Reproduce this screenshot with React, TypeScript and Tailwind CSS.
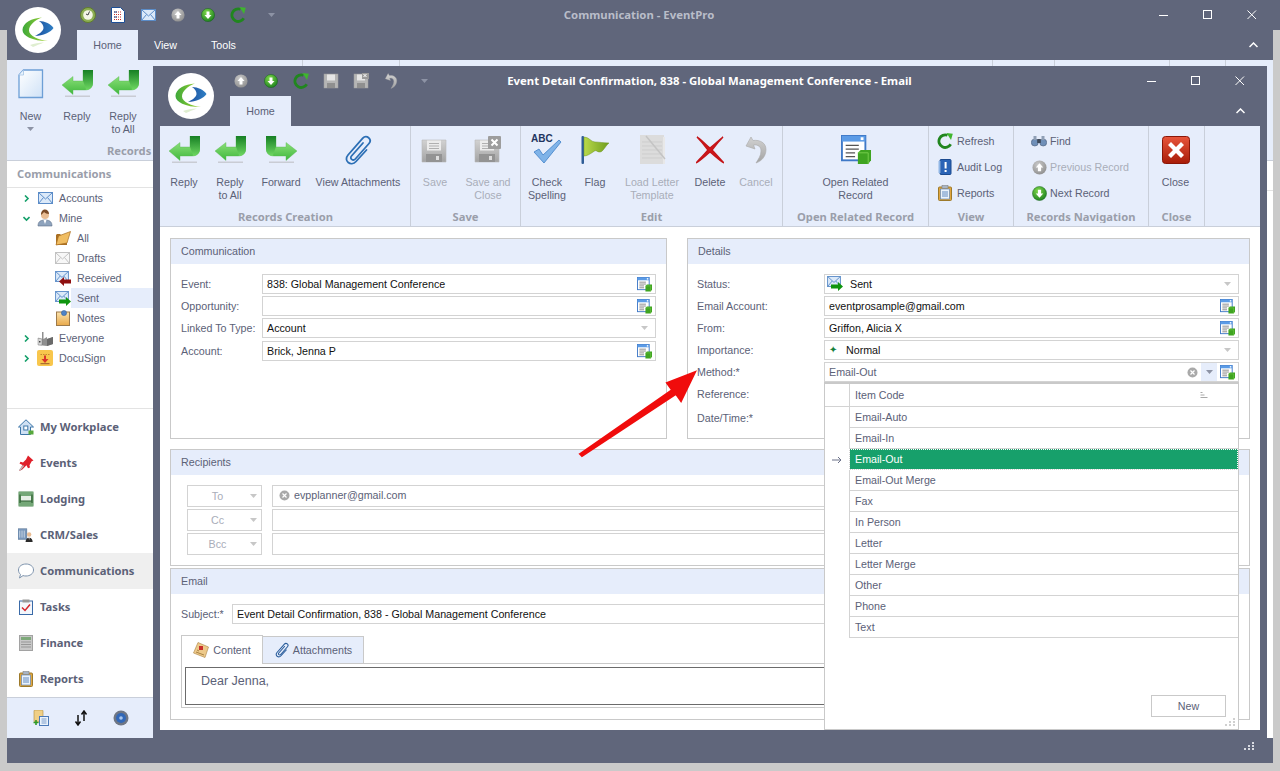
import React from "react";

type P = { s?: number };
const BOLD = "font-['Noto_Sans',sans-serif] font-bold text-[11.2px]";
const Defs = () => (
  <svg width="0" height="0" className="absolute">
    <defs>
      <linearGradient id="gArrow" x1="0" y1="0" x2="0" y2="1"><stop offset="0" stopColor="#a6ec8e" /><stop offset="1" stopColor="#3fb83c" /></linearGradient>
      <linearGradient id="gBend" x1="0" y1="0" x2="0" y2="1"><stop offset="0" stopColor="#167f24" /><stop offset="1" stopColor="#6fd862" /></linearGradient>
      <radialGradient id="gGreenBall" cx="0.4" cy="0.3" r="0.8"><stop offset="0" stopColor="#7fd84a" /><stop offset="1" stopColor="#157a1c" /></radialGradient>
      <radialGradient id="gGrayBall" cx="0.4" cy="0.3" r="0.8"><stop offset="0" stopColor="#c9c9c9" /><stop offset="1" stopColor="#8a8a8a" /></radialGradient>
      <linearGradient id="gPage" x1="0" y1="0" x2="1" y2="1"><stop offset="0" stopColor="#ffffff" /><stop offset="1" stopColor="#cfe2f7" /></linearGradient>
      <linearGradient id="gRed" x1="0" y1="0" x2="0" y2="1"><stop offset="0" stopColor="#e8553b" /><stop offset="1" stopColor="#a81c08" /></linearGradient>
      <linearGradient id="gFlag" x1="0" y1="0" x2="1" y2="0"><stop offset="0" stopColor="#b9d94a" /><stop offset="1" stopColor="#6f9d1d" /></linearGradient>
      <linearGradient id="gGray" x1="0" y1="0" x2="0" y2="1"><stop offset="0" stopColor="#d2d2d2" /><stop offset="1" stopColor="#a3a3a3" /></linearGradient>
      <linearGradient id="gOrange" x1="0" y1="0" x2="0" y2="1"><stop offset="0" stopColor="#fbe3ad" /><stop offset="1" stopColor="#e9a94a" /></linearGradient>
      <linearGradient id="gBlue" x1="0" y1="0" x2="1" y2="0"><stop offset="0" stopColor="#1c4f9e" /><stop offset="1" stopColor="#2f7fc4" /></linearGradient>
      <linearGradient id="gSwoosh" x1="0" y1="0" x2="1" y2="0"><stop offset="0" stopColor="#3da83a" /><stop offset="1" stopColor="#a7d52f" /></linearGradient>
    </defs>
  </svg>
);

const Logo = () => (
  <svg width="46" height="46" viewBox="0 0 46 46">
    <circle cx="23" cy="23" r="23" fill="#fff" />
    <path d="M27 10.500C17 11 7.500 16 7.500 23c0 6 9.500 11 25.500 11-9-1-19-5-19-10.500C14 18 20 13 27 10.500z" fill="url(#gSwoosh)" />
    <path d="M24 14c6 0 12 3 14.500 7-2.500 4-10.500 8-18.500 8 4-2 8.500-5 8.500-8 0-3-1.500-5-4.500-7z" fill="url(#gBlue)" />
    <path d="M15 38c4-1.500 9-2.500 14-2.500-4 1.500-8 3-11 4.500z" fill="#dfeed0" />
  </svg>
);

const Reply = ({ flip = false }: { flip?: boolean }) => (
  <svg width="31" height="28" viewBox="0 0 31 28" className={flip ? "-scale-x-100" : ""}>
    <rect x="3" y="25.500" width="25" height="1.500" fill="#c9ccd4" />
    <path d="M0 15 11 6.500V11h10V0h10v12c0 5-3 8-8 8H11v4.500z" fill="url(#gArrow)" stroke="#58b850" strokeWidth=".4" />
    <path d="M21 0h10v12c0 4-2 7-6 8-1 0-2-4-4-9z" fill="url(#gBend)" />
  </svg>
);
const NewDoc = () => (
  <svg width="26" height="30" viewBox="0 0 26 30">
    <path d="M5.500 1h19v27.500H1V6z" fill="url(#gPage)" stroke="#6d9fd6" strokeWidth="1.300" />
    <path d="M5.500 1v5H1" fill="#eaf3fc" stroke="#a5c4e6" strokeWidth=".8" />
  </svg>
);
const BallUp = ({ s = 16 }: P) => (
  <svg width={s} height={s} viewBox="0 0 16 16"><circle cx="8" cy="8" r="7.500" fill="url(#gGrayBall)" /><path d="M8 3.500 12 8H9.700v4H6.300V8H4z" fill="#fff" /></svg>
);
const BallDown = ({ s = 16 }: P) => (
  <svg width={s} height={s} viewBox="0 0 16 16"><circle cx="8" cy="8" r="7.500" fill="url(#gGreenBall)" stroke="#0f5f15" strokeWidth=".5" /><path d="M8 12.500 4 8h2.300V4h3.400v4H12z" fill="#fff" /></svg>
);
const Refresh = ({ s = 16 }: P) => (
  <svg width={s} height={s} viewBox="0 0 16 16"><path d="M13.700 11.300A6.300 6.300 0 1 1 10.500 2.300" fill="none" stroke="#21861f" strokeWidth="2.800" /><path d="M9.500 0 15.800 .8 14 7z" fill="#3fb52e" /></svg>
);
const Clock = () => (
  <svg width="16" height="16" viewBox="0 0 16 16"><circle cx="8" cy="8" r="7.500" fill="#8dae53" stroke="#5f7d2e" /><circle cx="8" cy="8" r="4.800" fill="#f3f5e6" /><path d="M8 8 9.500 4.500M8 8 6 7" stroke="#444" strokeWidth="1" /></svg>
);
const DocLines = () => (
  <svg width="14" height="16" viewBox="0 0 14 16"><path d="M.5.500h9L13.500 4.500V15.500H.5z" fill="#fff" stroke="#1d4f96" /><path d="M3 5h8M3 7.500h8M3 10h8M3 12.500h8" stroke="#c8322c" strokeDasharray="1 1" /><path d="M3 5h3M3 10h3" stroke="#1d4f96" /></svg>
);
const Mail = ({ w = 15, h = 12 }: { w?: number; h?: number }) => (
  <svg width={w} height={h} viewBox="0 0 15 12"><rect x=".5" y=".5" width="14" height="11" fill="#dbe9f9" stroke="#5b8cc8" /><path d="M.5.500 7.500 7l7-6.500M.5 11.500 5.500 5.500M14.500 11.500 9.500 5.500" fill="none" stroke="#5b8cc8" /></svg>
);
const Floppy = ({ x = false }: { x?: boolean }) => (
  <svg width="28" height="30" viewBox="0 0 28 30">
    <path d="M1 5h24v22H1z" fill="url(#gGray)" stroke="#bbb" strokeWidth=".6" />
    <rect x="6" y="5.500" width="14" height="10" fill="#ececec" />
    <path d="M8 8.500h10M8 11h10M8 13.500h10" stroke="#b0b0b0" />
    <rect x="5" y="19" width="16" height="8" fill="#939393" /><rect x="15" y="21" width="3" height="4" fill="#ddd" />
    {x && <g><rect x="14" y="1" width="13" height="13" rx="1" fill="#9d9d9d" /><path d="M17.500 4.500l6 6m0-6-6 6" stroke="#fff" strokeWidth="2" /></g>}
  </svg>
);
const SmallFloppy = ({ x = false }: { x?: boolean }) => (
  <svg width="16" height="16" viewBox="0 0 16 16">
    <rect x="1" y="1" width="14" height="14" fill="#b5b5b5" stroke="#a0a0a0" strokeWidth=".5" /><rect x="4" y="1.500" width="8" height="6" fill="#e6e6e6" /><rect x="4" y="10" width="8" height="5" fill="#8f8f8f" />
    {x && <g><rect x="9" y="0" width="7" height="6" fill="#9a9a9a" /><path d="m10.500 1 3 3m0-3-3 3" stroke="#fff" /></g>}
  </svg>
);
const Undo = ({ s = 16 }: P) => (
  <svg width={s} height={s} viewBox="0 0 22 28"><path d="M6 1 1 10l9 3-1.500-4c5-.6 7.500 2 7.500 6 0 4.500-2.500 8-5 12 6-2 10-7 10-13.500C21 7 15 3.500 8 4.500z" fill="url(#gGray)" stroke="#aaa" strokeWidth=".6" /></svg>
);
const Clip = ({ s = 32, c = "#2c6fb5" }: { s?: number; c?: string }) => (
  <svg width={s} height={s} viewBox="0 0 32 32" fill="none" stroke={c} strokeWidth={s > 20 ? 1.800 : 2.200} strokeLinecap="round">
    <path d="M21 9 9.500 22c-2.200 2.500 1.500 5.500 3.800 3L27 9.500c3.500-4-2.500-9.500-6.200-5.300L6 21c-5 5.800 3 12 8 6.500L24.500 16" />
  </svg>
);
const Spell = () => (
  <div className="relative w-[32px] h-[32px]">
    <span className="absolute left-0 top-[-1px] text-[10px] leading-[12px] font-bold text-[#1f3560]">ABC</span>
    <svg width="32" height="32" viewBox="0 0 32 32" className="absolute left-0 top-0"><path d="M3 18l5-3 4 6L28 6l2 2-17 21z" fill="#7fb3e8" stroke="#3f80c8" strokeWidth=".8" /></svg>
  </div>
);
const Flag = () => (
  <svg width="30" height="30" viewBox="0 0 30 30"><rect x="1.500" y="1" width="2.500" height="28" rx="1" fill="#2f5d96" /><path d="M4 2c5 0 7 5 11 5 4.500 0 8 1 14 1-3 2-6 9-9 9-4 0-3-3-7 0-3 2-6 4-9 4z" fill="url(#gFlag)" stroke="#6d9420" strokeWidth=".5" /></svg>
);
const LoadLetter = () => (
  <svg width="28" height="30" viewBox="0 0 28 30"><rect x="2" y="0" width="24" height="29" fill="#dcdcdc" /><rect x="25" y="2" width="2" height="27" fill="#e8e8e8" /><path d="M4 7h20M4 11h20M4 15h20M4 19h20M4 23h20" stroke="#cdcdcd" /><path d="M8 1 27 24" stroke="#c4c4c4" strokeWidth="1.500" /></svg>
);
const DelX = () => (
  <svg width="28" height="28" viewBox="0 0 28 28"><path d="M1 1c5 3 9 8 13 11 4-3 8-7 13-11-4 4-8 9-11 13 4 4 8 9 12 13-5-3-10-8-14-11-4 3-9 8-14 11 4-5 9-9 12-13C9 10 5 5 1 1z" fill="#d2161b" stroke="#c41418" strokeWidth="1.400" /></svg>
);
const Related = ({ s = 16 }: P) => (
  <svg width={s} height={s} viewBox="0 0 16 16">
    <rect x=".5" y=".5" width="12.500" height="13" fill="#fff" stroke="#3f79c7" /><rect x=".5" y=".5" width="12.500" height="3" fill="#5b9be6" /><rect x="10.500" y="1.200" width="1.500" height="1.500" fill="#fff" />
    <path d="M2.500 5.500h7M2.500 7.500h7M2.500 9.500h5M2.500 11.500h5" stroke="#555" strokeWidth=".7" />
    <path d="M9 9.500l1.500-1.500H16v5.500L14.500 15.500H9z" fill="#3fa421" /><path d="M9 9.500h5.500V15.500" fill="none" stroke="#77d04e" strokeWidth=".5" />
  </svg>
);
const Audit = () => (
  <svg width="16" height="16" viewBox="0 0 16 16"><rect x="3" y=".5" width="11" height="15" rx="1" fill="#2a63b6" stroke="#1b4a8f" /><rect x="1.500" y="2" width="2" height="12" fill="#8fb6e6" /><rect x="7.600" y="3" width="2" height="6.500" fill="#fff" /><rect x="7.600" y="11" width="2" height="2" fill="#fff" /></svg>
);
const ClipBoard = ({ s = 16 }: P) => (
  <svg width={s} height={s} viewBox="0 0 16 16"><rect x="1.500" y="2" width="13" height="13.500" rx="1" fill="#e0a63f" stroke="#9d7a2a" /><rect x="3.500" y="4" width="9" height="10" fill="#eaf2fb" stroke="#4a79b8" strokeWidth=".6" /><rect x="5" y=".5" width="6" height="3" fill="#a8b4c4" stroke="#777" strokeWidth=".5" /><path d="M5 7h6M5 9h6M5 11h6" stroke="#3f72b5" strokeWidth=".8" /></svg>
);
const Binoc = () => (
  <svg width="16" height="12" viewBox="0 0 16 12"><circle cx="3.800" cy="7.500" r="3.500" fill="#6f8fb8" stroke="#4a5d78" strokeWidth=".6" /><circle cx="12.200" cy="7.500" r="3.500" fill="#6f8fb8" stroke="#4a5d78" strokeWidth=".6" /><rect x="6.200" y="4" width="3.600" height="4" fill="#3f4a5a" /><rect x="2.500" y="1" width="3" height="4" fill="#8f9fb5" /><rect x="10.500" y="1" width="3" height="4" fill="#8f9fb5" /></svg>
);
const CloseBig = () => (
  <svg width="28" height="28" viewBox="0 0 28 28"><rect x=".5" y=".5" width="27" height="27" rx="3" fill="url(#gRed)" stroke="#8a1608" /><path d="M6 9 9 6l5 5 5-5 3 3-5 5 5 5-3 3-5-5-5 5-3-3 5-5z" fill="#fff" /></svg>
);
const Person = () => (
  <svg width="16" height="18" viewBox="0 0 16 18"><path d="M1 17c0-4 2-6 7-6s7 2 7 6z" fill="#8ea3bd" stroke="#5f7189" strokeWidth=".6" /><circle cx="8" cy="6" r="4" fill="#e9bd94" /><path d="M4 6c0-4 2-5.500 4-5.500S12 2 12 5c-2 0-4-1-5-2-.5 1-2 2-3 3z" fill="#7a4a26" /><path d="M6.500 11 8 15l1.500-4z" fill="#fff" /></svg>
);
const Folder = () => (
  <svg width="16" height="16" viewBox="0 0 16 16"><path d="M1 15V5l1-1h3l1 1h6v10z" fill="#a96f22" /><path d="M1 15 3.500 6 15.500 1.500 12 13z" fill="#f0bd62" stroke="#a96f22" strokeWidth=".7" /></svg>
);
const MailGray = () => (
  <svg width="15" height="12" viewBox="0 0 15 12"><rect x=".5" y=".5" width="14" height="11" fill="#f7f7f7" stroke="#c2c2c2" /><path d="M.5.500 7.500 7l7-6.500M.5 11.500 5.500 5.500M14.500 11.500 9.500 5.500" fill="none" stroke="#c2c2c2" /></svg>
);
const MailArrow = ({ c, left = false }: { c: string; left?: boolean }) => (
  <div className="relative w-[16px] h-[15px]">
    <Mail w={14} h={11} />
    <svg width="12" height="9" viewBox="0 0 12 9" className={left ? "absolute right-0 bottom-0 -scale-x-100" : "absolute right-0 bottom-0"}><path d="M0 2.500h7V0l5 4.500L7 9V6.500H0z" fill={c} /></svg>
  </div>
);
const Notes = () => (
  <svg width="14" height="16" viewBox="0 0 14 16"><rect x=".5" y="2" width="13" height="13.500" fill="url(#gOrange)" stroke="#9d7a4a" /><circle cx="8" cy="3" r="2.600" fill="#4f83c6" stroke="#2f5d96" strokeWidth=".5" /></svg>
);
const Factory = () => (
  <svg width="16" height="15" viewBox="0 0 16 15"><path d="M1 14V7l4 1V1h1.500v7L10 6v2l6-2v7l-6 2z" fill="#8f8f8f" /><path d="M1 7l4 1v6H1z" fill="#d8d8d8" stroke="#666" strokeWidth=".4" /><rect x="2" y="10" width="1.500" height="1.500" fill="#444" /><path d="M10 8l6-2v7l-6 2z" fill="#6a6a6a" /></svg>
);
const Docu = () => (
  <svg width="16" height="16" viewBox="0 0 16 16"><rect width="16" height="16" rx="2" fill="#f8c64c" /><path d="M3.500 4.500h9" stroke="#c3892f" strokeDasharray="1.500 1" /><path d="M8 13 4.500 9H7V5.500h2V9h2.500z" fill="#d9352a" /><path d="M3.500 13.700h9" stroke="#9a5a2a" /></svg>
);
const House = () => (
  <svg width="16" height="16" viewBox="0 0 16 16"><path d="M8 .8 .5 8h2v7.500h10V8h3z" fill="#cfe0f3" stroke="#3d76a8" /><rect x="5.800" y="7" width="4" height="4" fill="#fff" stroke="#3d76a8" /><rect x="10.500" y="11.500" width="5" height="4" fill="#57a83b" /></svg>
);
const Pin = () => (
  <svg width="16" height="16" viewBox="0 0 16 16"><path d="M10 .5 15.500 5.500l-1.800.8-2.200 4 .5 2.200-2 .7-1.500-3-4.500 4.500L1 16l3.500-6-3-1.500 1-1.800L5 7.500l3-3z" fill="#e0202a" /><path d="M1.500 15.500 5.500 10.500" stroke="#bbb" strokeWidth="1.500" /></svg>
);
const Bed = () => (
  <svg width="16" height="16" viewBox="0 0 16 16"><rect x=".5" y=".5" width="15" height="15" rx="1" fill="#74a777" stroke="#a5c4a7" /><rect x="3" y="5" width="10" height="5" fill="#e6efe6" /><path d="M2 3.500V12M14 3.500V12M2 10h12" stroke="#2f5f33" strokeWidth="1.200" fill="none" /></svg>
);
const Building = () => (
  <svg width="18" height="16" viewBox="0 0 18 16"><rect x="0" y="1" width="10" height="12" fill="#7896ba" stroke="#50698a" strokeWidth=".5" /><path d="M2 3v8M4.500 3v8M7 3v8" stroke="#d3deea" /><circle cx="12.500" cy="7.500" r="2.500" fill="#e9bd94" /><path d="M8.500 16c0-3 1.500-5 4-5s4 2 4 5z" fill="#2b2b2b" /><path d="M12 11h1l-.5 3z" fill="#fff" /></svg>
);
const Bubble = () => (
  <svg width="16" height="16" viewBox="0 0 16 16"><path d="M8 1c4 0 7.500 2.300 7.500 6S12 13 8 13c-1 0-2-.1-3-.4L1.500 15l1-3.600C1.200 10.300.5 8.800.5 7 .5 3.300 4 1 8 1z" fill="#fff" stroke="#7d93ad" /></svg>
);
const TaskIcon = () => (
  <svg width="14" height="16" viewBox="0 0 14 16"><rect x=".5" y="2" width="13" height="13.500" fill="#f3f7fc" stroke="#3a6aa8" /><rect x="3.500" y=".5" width="7" height="3" fill="#999" /><path d="M3 8.500l3 3 5-6" fill="none" stroke="#d6242c" strokeWidth="1.500" /></svg>
);
const Calc = () => (
  <svg width="14" height="16" viewBox="0 0 14 16"><rect x=".5" y=".5" width="13" height="15" fill="#c8c8c8" stroke="#a2a2a2" /><rect x="2" y="2" width="10" height="3" fill="#7ea97a" /><path d="M2.500 7h9M2.500 9.500h9M2.500 12h9" stroke="#666" strokeWidth="1.200" strokeDasharray="1 1" /></svg>
);
const Pages = () => (
  <svg width="16" height="16" viewBox="0 0 16 16"><rect x="1" y="0" width="9" height="12" rx="1" fill="#f0cf86" stroke="#b08b3a" strokeWidth=".6" /><rect x="6.500" y="6.500" width="9" height="9" fill="#eaf2fb" stroke="#4a79b8" /><path d="M8.500 9h5M8.500 11h5M8.500 13h5" stroke="#4a79b8" strokeWidth=".7" /><path d="M3 10v5M.5 12.500h5" stroke="#2f9a28" strokeWidth="1.600" /></svg>
);
const SortArrows = () => (
  <svg width="16" height="16" viewBox="0 0 16 16"><path d="M5 5v9M2.500 11.500 5 15l2.500-3.500M11 11V1.500M8.500 4.500 11 1l2.500 3.500" fill="none" stroke="#111" strokeWidth="1.500" /></svg>
);
const Disc = () => (
  <svg width="16" height="16" viewBox="0 0 16 16"><circle cx="8" cy="8" r="7.500" fill="#6f7684" /><circle cx="8" cy="8" r="5" fill="#3268b8" /><circle cx="8" cy="8" r="1.800" fill="#a9c6ec" /></svg>
);
const ContentIco = () => (
  <svg width="16" height="16" viewBox="0 0 16 16"><path d="M5 .5 15.500 5 12 15.500 .5 11z" fill="#edc98a" stroke="#a98242" strokeWidth=".6" /><rect x="6" y="4" width="4" height="4" fill="#c9302c" /><path d="M3 10l8 3M4 8l2 1" stroke="#a98242" /></svg>
);
const Caret = ({ c = "#c7c7c7" }: { c?: string }) => (
  <svg width="7" height="4" viewBox="0 0 7 4" className="shrink-0"><path d="M0 0h7L3.500 4z" fill={c} /></svg>
);
const TreeCaret = ({ open }: { open?: boolean }) => (
  <svg width="7" height="7" viewBox="0 0 7 7">{open ? <path d="M.5 2 3.500 5 6.500 2" fill="none" stroke="#16a06b" strokeWidth="1.600" /> : <path d="M2 .5 5 3.500 2 6.500" fill="none" stroke="#16a06b" strokeWidth="1.600" />}</svg>
);
const ClearDot = () => (
  <svg width="11" height="11" viewBox="0 0 11 11" className="shrink-0"><circle cx="5.500" cy="5.500" r="5" fill="#a9a9a9" /><path d="m3.500 3.500 4 4m0-4-4 4" stroke="#fff" strokeWidth="1.200" /></svg>
);
const Grip = () => (
  <svg width="11" height="9" viewBox="0 0 11 9" fill="currentColor"><rect x="8" y="0" width="2" height="2" /><rect x="4" y="3" width="2" height="2" /><rect x="8" y="3" width="2" height="2" /><rect x="0" y="6" width="2" height="2" /><rect x="4" y="6" width="2" height="2" /><rect x="8" y="6" width="2" height="2" /></svg>
);

const WinControls = () => (
  <div className="flex items-center text-white">
    <div className="w-[44px] flex justify-center"><svg width="10" height="10" viewBox="0 0 10 10"><path d="M0 5.500h9" stroke="currentColor" /></svg></div>
    <div className="w-[44px] flex justify-center"><svg width="10" height="10" viewBox="0 0 10 10"><rect x=".5" y=".5" width="8" height="8" fill="none" stroke="currentColor" /></svg></div>
    <div className="w-[44px] flex justify-center"><svg width="10" height="10" viewBox="0 0 10 10"><path d="m.5.500 8.500 8.500m0-8.500L.5 9" stroke="currentColor" /></svg></div>
  </div>
);
const Collapse = () => (
  <svg width="9" height="6" viewBox="0 0 9 6"><path d="M.5 5 4.500 1l4 4" fill="none" stroke="#fff" strokeWidth="1.500" /></svg>
);

const Big = ({ w, icon, children, dim, }: { w: string; icon: React.ReactNode; children: React.ReactNode; dim?: boolean }) => (
  <div className={`${w} flex flex-col items-center pt-[4px]`}>
    <div className="h-[40px] flex items-center justify-center">{icon}</div>
    <div className={`mt-[6px] text-center leading-[13px] whitespace-nowrap ${dim ? "text-[#a9adb9]" : "text-[#5b6177]"}`}>{children}</div>
  </div>
);
const Group = ({ w, label, children }: { w: string; label: string; children: React.ReactNode }) => (
  <div className={`${w} border-r border-[#c9cfda] flex flex-col h-full`}>
    <div className="flex-1 flex min-h-0">{children}</div>
    <div className={`h-[13px] mb-[3px] text-center leading-[13px] text-[#9a9eaa] whitespace-nowrap overflow-hidden ${BOLD}`}>{label}</div>
  </div>
);
const SmallBtn = ({ icon, label, dim, gap }: { icon: React.ReactNode; label: string; dim?: boolean; gap: string }) => (
  <div className={`h-[26px] flex items-center ${gap} ${dim ? "text-[#a9adb9]" : "text-[#5b6177]"}`}>
    <div className="w-[16px] flex justify-center">{icon}</div><span className="whitespace-nowrap">{label}</span>
  </div>
);

const Input = ({ children, right, dark = true, cls = "" }: { children?: React.ReactNode; right?: React.ReactNode; dark?: boolean; cls?: string }) => (
  <div className={`flex-1 min-w-0 h-[20px] border border-[#d3d3d3] bg-white flex items-center pl-[4px] pr-[2px] whitespace-nowrap ${dark ? "text-[#111]" : "text-[#5b6177]"} ${cls}`}>
    <div className="flex-1 flex items-center min-w-0">{children}</div>{right}
  </div>
);
const Field = ({ label, lw, mt = "", children }: { label: string; lw: string; mt?: string; children?: React.ReactNode }) => (
  <div className={`flex items-center h-[20px] ${mt}`}>
    <div className={`${lw} shrink-0 text-[#5b6177] whitespace-nowrap`}>{label}</div>{children}
  </div>
);
const Lookup = () => <div className="mr-[1px]"><Related s={15} /></div>;
const DropC = () => <div className="mr-[5px]"><Caret /></div>;
const PanelHead = ({ t }: { t: string }) => <div className="h-[25px] bg-[#e6edfb] flex items-center pl-[10px] pb-[1px] text-[#5b6177] shrink-0">{t}</div>;

const TreeRow = ({ open, icon, label }: { open?: boolean; icon: React.ReactNode; label: string }) => (
  <div className="h-[20px] flex items-center pl-[16px] text-[#5b6177]">
    <div className="w-[14px]"><TreeCaret open={open} /></div>
    <div className="w-[16px] flex justify-center">{icon}</div>
    <span className="ml-[6px]">{label}</span>
  </div>
);
const SubRow = ({ icon, label, on }: { icon: React.ReactNode; label: string; on?: boolean }) => (
  <div className="h-[20px] flex items-center pl-[47px] text-[#5b6177]">
    <div className="w-[17px] flex justify-center">{icon}</div>
    <div className={`flex-1 h-full flex items-center pl-[6px] ${on ? "bg-[#e6edfb]" : ""}`}>{label}</div>
  </div>
);
const NavRow = ({ icon, label, on }: { icon: React.ReactNode; label: string; on?: boolean }) => (
  <div className={`h-[36px] flex items-center pl-[11px] text-[#5b6177] ${BOLD} ${on ? "bg-[#efefef]" : ""}`}>
    <div className="w-[16px] flex justify-center">{icon}</div><span className="ml-[6px]">{label}</span>
  </div>
);
const Recip = ({ label }: { label: string }) => (
  <div className="w-[75px] h-[22px] border border-[#d3d3d3] flex items-center text-[#a9adb9]">
    <span className="flex-1 text-center pr-[3px]">{label}</span><div className="mr-[4px]"><Caret /></div>
  </div>
);
const items = ["Email-Auto", "Email-In", "Email-Out", "Email-Out Merge", "Fax", "In Person", "Letter", "Letter Merge", "Other", "Phone", "Text"];

export default function App() {
  return (
    <div className="relative w-[1280px] h-[771px] overflow-hidden bg-[#cacaca] flex flex-col font-['Liberation_Sans',sans-serif] text-[10.7px]">
      <Defs />
      {/* outer window */}
      <div className="h-[30px] shrink-0 bg-[#60667b] flex items-center relative">
        <div className="flex items-center ml-[73px]">
          <div className="w-[30px] flex justify-center"><Clock /></div>
          <div className="w-[30px] flex justify-center"><DocLines /></div>
          <div className="w-[30px] flex justify-center"><Mail /></div>
          <div className="w-[30px] flex justify-center"><BallUp s={14} /></div>
          <div className="w-[30px] flex justify-center"><BallDown s={14} /></div>
          <div className="w-[30px] flex justify-center"><Refresh /></div>
          <div className="w-[36px] flex justify-center"><Caret c="#8d93a5" /></div>
        </div>
        <div className="flex-1 text-center text-[#b9bdc9] pr-[153px] whitespace-nowrap font-['Noto_Sans',sans-serif] font-bold text-[11.35px]">Communication - EventPro</div>
        <div className="mr-[6px]"><WinControls /></div>
      </div>
      <div className="flex-1 mx-[7px] flex flex-col min-h-0">
        <div className="h-[30px] shrink-0 bg-[#60667b] flex items-stretch pl-[70px] text-white pr-[15px]">
          <div className="w-[61px] bg-[#e6edfb] text-[#5b6177] flex items-center justify-center">Home</div>
          <div className="w-[55px] flex items-center justify-center">View</div>
          <div className="w-[61px] flex items-center justify-center">Tools</div>
          <div className="flex-1 flex items-center justify-end"><Collapse /></div>
        </div>
        <div className="h-[101px] shrink-0 bg-[#e6edfb] border-b border-[#c9cfda] flex">
          <Group w="w-[296px]" label="Records Creation">
            <Big w="w-[47px]" icon={<NewDoc />}><div>New</div><div className="flex justify-center mt-[4px]"><Caret c="#8d93a5" /></div></Big>
            <Big w="w-[46px]" icon={<Reply />}>Reply</Big>
            <Big w="w-[46px]" icon={<Reply />}>Reply<br />to All</Big>
          </Group>
          <Group w="w-[97px]" label=""><div /></Group>
          <Group w="w-[593px]" label=""><div /></Group>
          <Group w="w-[62px]" label=""><div /></Group>
          <Group w="w-[115px]" label=""><div /></Group>
          <Group w="w-[56px]" label=""><div /></Group>
        </div>
        <div className="flex-1 flex min-h-0">
          <aside className="w-[146px] shrink-0 bg-white flex flex-col">
            <div className={`h-[27px] shrink-0 border-b border-[#e3e3e3] flex items-center pl-[10px] text-[#9a9eaa] ${BOLD}`}>Communications</div>
            <div className="flex-1">
              <TreeRow icon={<Mail />} label="Accounts" />
              <TreeRow open icon={<Person />} label="Mine" />
              <SubRow icon={<Folder />} label="All" />
              <SubRow icon={<MailGray />} label="Drafts" />
              <SubRow icon={<MailArrow c="#8f1010" left />} label="Received" />
              <SubRow on icon={<MailArrow c="#0f950f" />} label="Sent" />
              <SubRow icon={<Notes />} label="Notes" />
              <TreeRow icon={<Factory />} label="Everyone" />
              <TreeRow icon={<Docu />} label="DocuSign" />
            </div>
            <div className="border-t border-[#e3e3e3]">
              <NavRow icon={<House />} label="My Workplace" />
              <NavRow icon={<Pin />} label="Events" />
              <NavRow icon={<Bed />} label="Lodging" />
              <NavRow icon={<Building />} label="CRM/Sales" />
              <NavRow on icon={<Bubble />} label="Communications" />
              <NavRow icon={<TaskIcon />} label="Tasks" />
              <NavRow icon={<Calc />} label="Finance" />
              <NavRow icon={<ClipBoard />} label="Reports" />
            </div>
            <div className="h-[41px] shrink-0 bg-[#e6edfb] border-t border-[#c9cfda] flex items-center pl-[26px] gap-[24px]">
              <Pages /><SortArrows /><Disc />
            </div>
          </aside>
          <main className="flex-1 bg-white"><div className="h-[30px] border-b border-[#e3e3e3]" /></main>
        </div>
        <div className="h-[25px] shrink-0 bg-[#60667b] flex justify-end items-start pr-[18px] pt-[4px] text-[#d9dbe2]"><Grip /></div>
      </div>
      <div className="h-[8px] shrink-0" />

      {/* logos */}
      <div className="absolute left-[15px] top-[7px]"><Logo /></div>

      {/* modal window */}
      <div className="absolute left-[153px] top-[66px] w-[1114px] h-[672px] bg-[#60667b] flex flex-col px-[7px] pb-[8px]">
        <div className="absolute left-[15px] top-[7px]"><Logo /></div>
        <div className="h-[30px] shrink-0 flex items-center relative">
          <div className="flex items-center ml-[66px]">
            <div className="w-[30px] flex justify-center"><BallUp s={14} /></div>
            <div className="w-[30px] flex justify-center"><BallDown s={14} /></div>
            <div className="w-[30px] flex justify-center"><Refresh /></div>
            <div className="w-[30px] flex justify-center"><SmallFloppy /></div>
            <div className="w-[30px] flex justify-center"><SmallFloppy x /></div>
            <div className="w-[30px] flex justify-center"><Undo /></div>
            <div className="w-[36px] flex justify-center"><Caret c="#8d93a5" /></div>
          </div>
          <div className="flex-1 text-center text-white whitespace-nowrap pr-[153px] font-['Noto_Sans',sans-serif] font-bold text-[11.35px]">Event Detail Confirmation, 838 - Global Management Conference - Email</div>
          <div className="-mr-[2px]"><WinControls /></div>
        </div>
        <div className="h-[30px] shrink-0 flex items-stretch pl-[70px] pr-[15px]">
          <div className="w-[61px] bg-[#e6edfb] text-[#5b6177] flex items-center justify-center">Home</div>
          <div className="flex-1 flex items-center justify-end"><Collapse /></div>
        </div>
        <div className="h-[101px] shrink-0 bg-[#e6edfb] border-b border-[#c9cfda] flex pl-[1px]">
          <Group w="w-[250px]" label="Records Creation">
            <Big w="w-[46px]" icon={<Reply />}>Reply</Big>
            <Big w="w-[46px]" icon={<Reply />}>Reply<br />to All</Big>
            <Big w="w-[56px]" icon={<Reply flip />}>Forward</Big>
            <Big w="w-[98px]" icon={<Clip />}>View Attachments</Big>
          </Group>
          <Group w="w-[110px]" label="Save">
            <Big w="w-[48px]" dim icon={<Floppy />}>Save</Big>
            <Big w="w-[58px]" dim icon={<Floppy x />}>Save and<br />Close</Big>
          </Group>
          <Group w="w-[262px]" label="Edit">
            <Big w="w-[52px]" icon={<Spell />}>Check<br />Spelling</Big>
            <Big w="w-[44px]" icon={<Flag />}>Flag</Big>
            <Big w="w-[70px]" dim icon={<LoadLetter />}>Load Letter<br />Template</Big>
            <Big w="w-[46px]" icon={<DelX />}>Delete</Big>
            <Big w="w-[46px]" dim icon={<Undo s={28} />}>Cancel</Big>
          </Group>
          <Group w="w-[146px]" label="Open Related Record">
            <Big w="w-[145px]" icon={<Related s={30} />}>Open Related<br />Record</Big>
          </Group>
          <Group w="w-[85px]" label="View">
            <div className="pl-[8px] pt-[2px]">
              <SmallBtn gap="gap-[4px]" icon={<Refresh />} label="Refresh" />
              <SmallBtn gap="gap-[4px]" icon={<Audit />} label="Audit Log" />
              <SmallBtn gap="gap-[4px]" icon={<ClipBoard />} label="Reports" />
            </div>
          </Group>
          <Group w="w-[135px]" label="Records Navigation">
            <div className="pl-[17px] pt-[2px]">
              <SmallBtn gap="gap-[3px]" icon={<Binoc />} label="Find" />
              <SmallBtn gap="gap-[3px]" dim icon={<BallUp s={15} />} label="Previous Record" />
              <SmallBtn gap="gap-[3px]" icon={<BallDown s={15} />} label="Next Record" />
            </div>
          </Group>
          <Group w="w-[56px]" label="Close">
            <Big w="w-[53px]" icon={<CloseBig />}>Close</Big>
          </Group>
        </div>
        <div className="flex-1 bg-white px-[10px] pt-[11px] min-h-0">
          <div className="flex gap-[20px]">
            <section className="w-[497px] h-[201px] border border-[#c9c9c9]">
              <PanelHead t="Communication" />
              <div className="pl-[10px] pr-[10px] pt-[10px]">
                <Field label="Event:" lw="w-[81px]"><Input right={<Lookup />}>838: Global Management Conference</Input></Field>
                <Field label="Opportunity:" lw="w-[81px]" mt="mt-[2px]"><Input right={<Lookup />} /></Field>
                <Field label="Linked To Type:" lw="w-[81px]" mt="mt-[2px]"><Input right={<DropC />}>Account</Input></Field>
                <Field label="Account:" lw="w-[81px]" mt="mt-[3px]"><Input right={<Lookup />}>Brick, Jenna P</Input></Field>
              </div>
            </section>
            <section className="w-[563px] h-[201px] border border-[#c9c9c9]">
              <PanelHead t="Details" />
              <div className="pl-[9px] pr-[10px] pt-[10px]">
                <Field label="Status:" lw="w-[127px]"><Input right={<DropC />} cls="!pl-[2px]"><MailArrow c="#0f950f" /><span className="ml-[7px]">Sent</span></Input></Field>
                <Field label="Email Account:" lw="w-[127px]" mt="mt-[2px]"><Input right={<Lookup />}>eventprosample@gmail.com</Input></Field>
                <Field label="From:" lw="w-[127px]" mt="mt-[2px]"><Input right={<Lookup />}>Griffon, Alicia X</Input></Field>
                <Field label="Importance:" lw="w-[127px]" mt="mt-[2px]"><Input right={<DropC />}><span className="text-[#16803c] mr-[9px] text-[10px] leading-none">✦</span>Normal</Input></Field>
                <Field label="Method:*" lw="w-[127px]" mt="mt-[2px]">
                  <Input dark={false} right={<div className="flex items-center h-full"><ClearDot /><div className="ml-[3px] w-[16px] h-full bg-[#e6edfb] flex items-center justify-center"><Caret c="#8d93a5" /></div><div className="ml-[3px]"><Lookup /></div></div>}>Email-Out</Input>
                </Field>
                <Field label="Reference:" lw="w-[127px]" mt="mt-[2px]"><Input /></Field>
                <Field label="Date/Time:*" lw="w-[127px]" mt="mt-[4px]"><Input /></Field>
              </div>
            </section>
          </div>
          <section className="mt-[10px] h-[117px] border border-[#c9c9c9]">
            <PanelHead t="Recipients" />
            <div className="flex pl-[16px] pr-[10px] pt-[10px] gap-[10px]">
              <div className="flex flex-col gap-[2px]"><Recip label="To" /><Recip label="Cc" /><Recip label="Bcc" /></div>
              <div className="flex-1 flex flex-col gap-[2px]">
                <Input dark={false} cls="!pl-[6px]"><ClearDot /><span className="ml-[4px] pb-[1px]">evpplanner@gmail.com</span></Input>
                <Input /><Input />
              </div>
            </div>
          </section>
          <section className="mt-[2px] h-[152px] border border-[#c9c9c9] flex flex-col">
            <PanelHead t="Email" />
            <div className="pl-[10px] pr-[10px] pt-[10px] flex-1 flex flex-col">
              <Field label="Subject:*" lw="w-[51px]"><Input>Event Detail Confirmation, 838 - Global Management Conference</Input></Field>
              <div className="flex mt-[11px] h-[29px] shrink-0 relative z-10">
                <div className="w-[82px] border border-b-0 border-[#c9c9c9] bg-white flex items-center justify-center gap-[4px] text-[#5b6177]"><ContentIco />Content</div>
                <div className="w-[101px] mt-[1px] border border-l-0 border-[#c9c9c9] bg-[#e6edfb] flex items-center justify-center gap-[3px] text-[#5b6177]"><Clip s={16} c="#2a5d9c" />Attachments</div>
              </div>
              <div className="h-[45px] -mt-[1px] border border-[#c9c9c9] pt-[3px] px-[3px]">
                <div className="h-[38px] border border-[#6b6b6b] pl-[15px] pt-[4px] text-[12.5px] text-[#5b6177]">Dear Jenna,</div>
              </div>
            </div>
          </section>
        </div>

        {/* dropdown popup */}
        <div className="absolute left-[671px] top-[316px] w-[415px] h-[348px] bg-white border border-[#c9c9c9] border-t-2 flex flex-col text-[#5b6177]">
          <div className="h-[23px] shrink-0 flex border-b border-[#d3d3d3]">
            <div className="w-[24px] shrink-0" />
            <div className="flex-1 border-l border-[#d3d3d3] flex items-center pl-[5px] pr-[30px] justify-between">
              <span>Item Code</span>
              <svg width="8" height="8" viewBox="0 0 8 8"><path d="M.5 1.500h2M.5 4h4M.5 6.500h7" stroke="#a8a8a8" /></svg>
            </div>
          </div>
          {items.map((it) => {
            const on = it === "Email-Out";
            return (
              <div key={it} className="h-[21px] shrink-0 flex">
                <div className="w-[24px] shrink-0 flex items-center justify-center">
                  {on && <svg width="10" height="8" viewBox="0 0 10 8"><path d="M0 4h9M6 1l3 3-3 3" fill="none" stroke="#6a7088" /></svg>}
                </div>
                <div className={`flex-1 border-l border-b border-[#d3d3d3] flex items-center pl-[5px] ${on ? "bg-[#17a06b] text-white outline-1 -outline-offset-1 outline-dotted outline-white" : ""}`}>{it}</div>
              </div>
            );
          })}
          <div className="flex-1 flex justify-end items-start pt-[57px] pr-[12px]">
            <div className="w-[75px] h-[22px] border border-[#c9c9c9] flex items-center justify-center">New</div>
          </div>
          <div className="absolute right-[2px] bottom-[2px] text-[#d0d0d0]"><Grip /></div>
        </div>
      </div>

      {/* annotation arrow */}
      <svg width="130" height="95" viewBox="0 0 130 95" className="absolute left-[572px] top-[366px]">
        <path d="M8 88 100 24l-5-7L123 6l-14 29-5-7L10 90z" fill="#f00c0c" stroke="#f00c0c" strokeWidth="2" />
      </svg>
    </div>
  );
}
